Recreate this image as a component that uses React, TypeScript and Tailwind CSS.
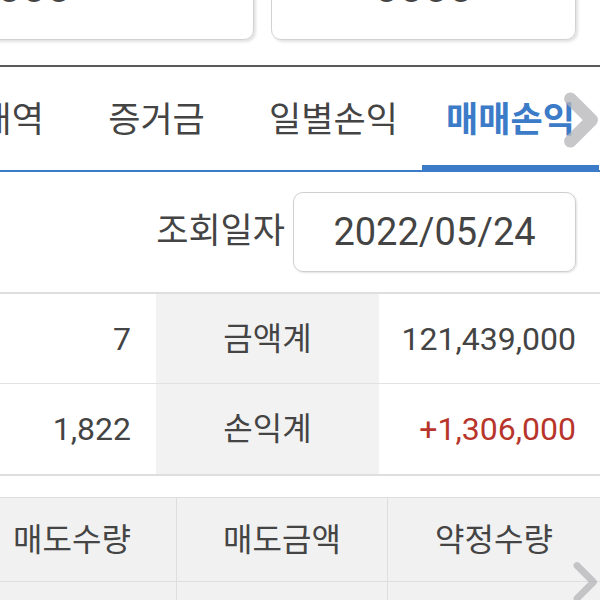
import { ReactNode } from 'react';

const FONT = { fontFamily: "Roboto, 'Noto Sans CJK KR', sans-serif" };

function Chevron({ className, w }: { className: string; w: number }) {
  return (
    <svg className={className} viewBox="0 0 40 60" fill="none">
      <polyline
        points="8,8 30,30 8,52"
        stroke="#b4b4b8"
        strokeOpacity="0.75"
        strokeWidth={w}
        strokeLinecap="round"
        strokeLinejoin="round"
      />
    </svg>
  );
}

function SumRow({ left, label, right, red, last }: { left: string; label: string; right: string; red?: boolean; last?: boolean }) {
  return (
    <div className={`grid grid-cols-[156px_223px_1fr] h-[90px] ${last ? '' : 'border-b border-[#e2e2e2]'}`}>
      <div className="flex items-center justify-end pr-[25px] text-[32px] text-[#444]">{left}</div>
      <div className="flex items-center justify-center bg-[#f2f2f2] text-[32px] text-[#444]">{label}</div>
      <div className={`flex items-center justify-end pr-[24px] text-[32px] ${red ? 'text-[#b8352b]' : 'text-[#444]'}`}>{right}</div>
    </div>
  );
}

function HeadCell({ children, last }: { children: ReactNode; last?: boolean }) {
  return (
    <div className={`flex items-center justify-center bg-[#f1f1f1] text-[32px] text-[#444] ${last ? '' : 'border-r border-[#dedede]'}`}>
      {children}
    </div>
  );
}

export default function App() {
  const tabs = ['거래내역', '증거금', '일별손익', '매매손익'];
  return (
    <div className="w-[600px] h-[600px] overflow-hidden bg-white relative" style={FONT}>
      {/* top summary cards (scrolled, only bottom visible) */}
      <div className="flex gap-[17px] mt-[-60px]">
        <div className="w-[274px] ml-[-20px] h-[100px] border border-[#d2d2d2] rounded-[10px] shadow-[2px_2px_3px_rgba(0,0,0,0.12)] flex items-end justify-end pr-[182px] pb-[30px] text-[44px] leading-[44px] text-[#444]">
          0,000
        </div>
        <div className="w-[305px] h-[100px] border border-[#d2d2d2] rounded-[10px] shadow-[2px_2px_3px_rgba(0,0,0,0.12)] flex items-end justify-center pb-[30px] text-[44px] leading-[44px] text-[#444]">
          0000
        </div>
      </div>

      <div className="mt-[25px] h-[2px] bg-[#5a5a5a]" />

      {/* tab bar */}
      <div className="relative">
        <div className="flex ml-[-109px] h-[103px]">
          {tabs.map((t, i) => {
            const active = i === tabs.length - 1;
            return (
              <div key={t} className="relative w-[177px] shrink-0 flex items-center justify-center pt-[6px]">
                <span className={`text-[35px] ${active ? 'text-[#3b7bc8] font-bold' : 'text-[#444]'}`}>{t}</span>
                {active && <div className="absolute left-0 right-0 bottom-[-2px] h-[7px] bg-[#3b7bc8]" />}
              </div>
            );
          })}
        </div>
        <div className="h-[2px] bg-[#3b7bc8]" />
        <Chevron className="absolute left-[562px] top-[24px] w-[40px] h-[58px]" w={13} />
      </div>

      {/* date filter */}
      <div className="flex justify-end items-center gap-[8px] pr-[24px] pt-[20px] pb-[20px]">
        <span className="text-[35px] text-[#444]">조회일자</span>
        <div className="w-[283px] h-[80px] border border-[#cfcfcf] rounded-[10px] shadow-[1px_1px_2px_rgba(0,0,0,0.12)] flex items-center justify-center text-[38px] text-[#444]">
          2022/05/24
        </div>
      </div>

      {/* totals */}
      <div className="border-t-2 border-b-2 border-[#dedede]">
        <SumRow left="7" label="금액계" right="121,439,000" />
        <SumRow left="1,822" label="손익계" right="+1,306,000" red last />
      </div>

      {/* detail header */}
      <div className="mt-[21px] border-t border-[#dedede] relative">
        <div className="grid grid-cols-[209px_211px_1fr] ml-[-32px] h-[84px] border-b border-[#dedede]">
          <HeadCell>매도수량</HeadCell>
          <HeadCell>매도금액</HeadCell>
          <HeadCell last>약정수량</HeadCell>
        </div>
        <div className="grid grid-cols-[209px_211px_1fr] ml-[-32px] h-[84px]">
          <HeadCell>매수수량</HeadCell>
          <HeadCell>매수금액</HeadCell>
          <HeadCell last>약정금액</HeadCell>
        </div>
        <Chevron className="absolute left-[571px] top-[61px] w-[30px] h-[46px]" w={9} />
      </div>
    </div>
  );
}
